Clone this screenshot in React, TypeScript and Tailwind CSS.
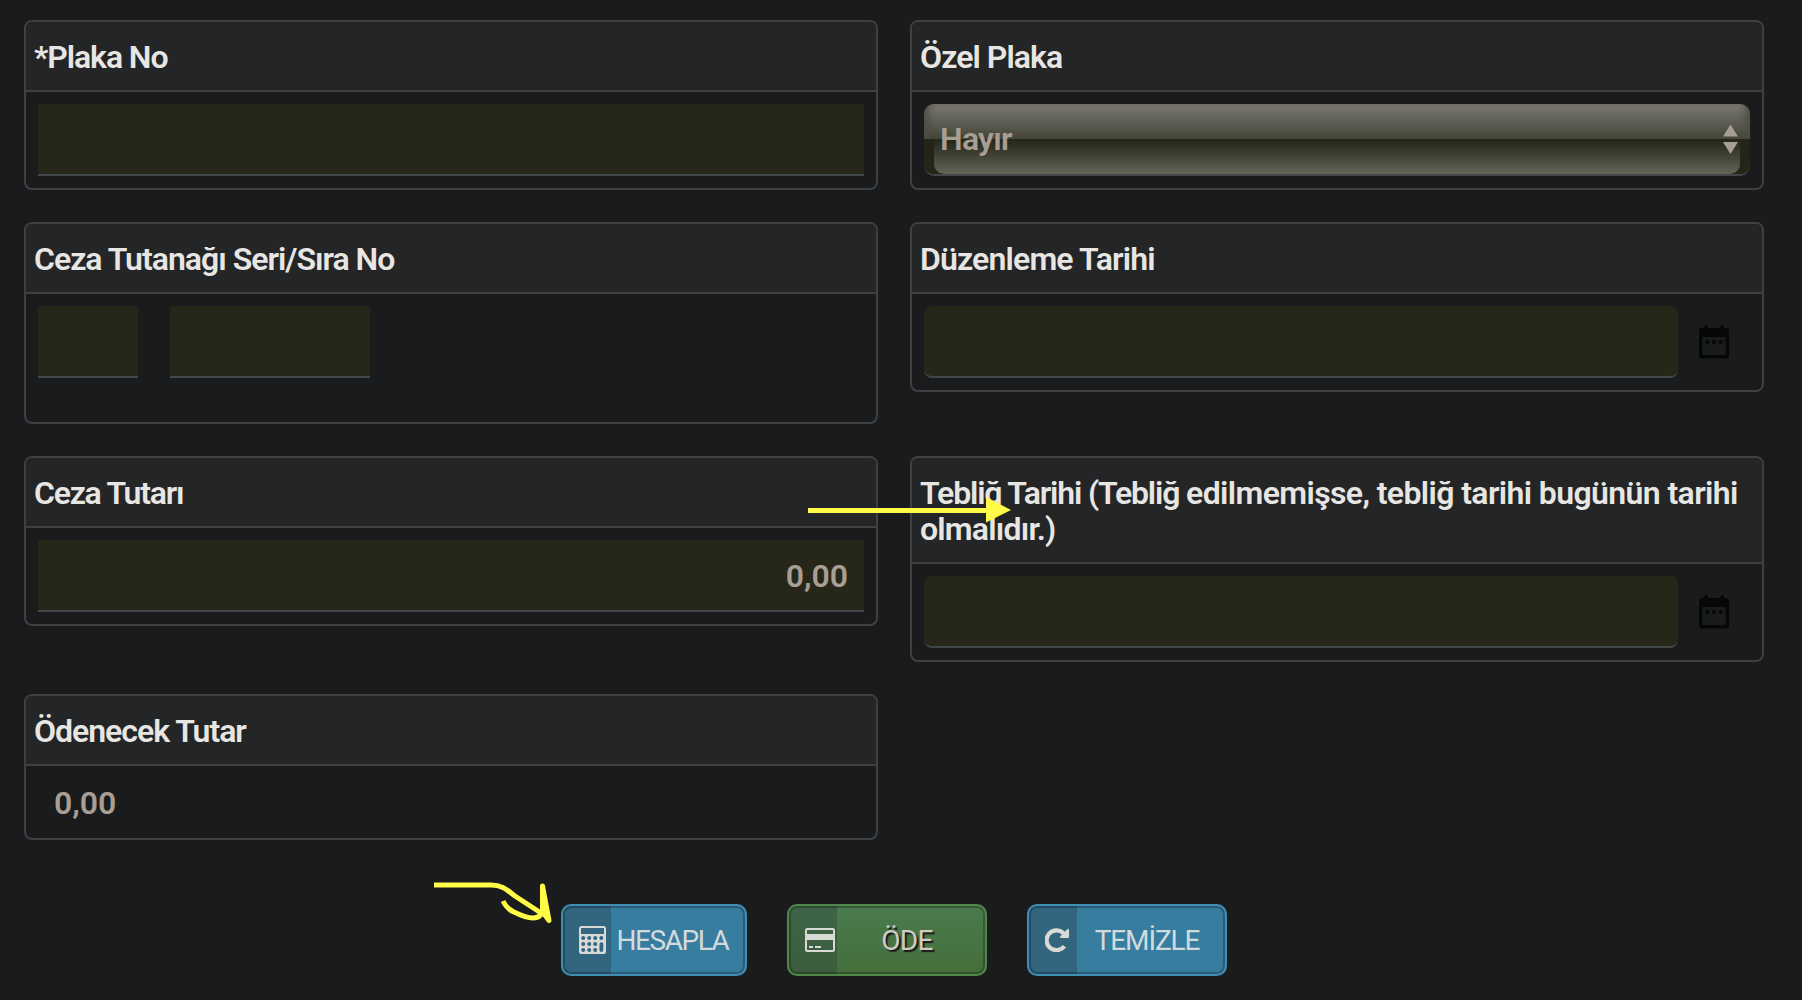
import type { ReactNode } from "react";

function Card({ title, children }: { title: ReactNode; children: ReactNode }) {
  return (
    <section className="overflow-hidden rounded-lg border-2 border-[#3e4042] bg-[#191b1d]">
      <h2 className="border-b-2 border-[#3e4042] bg-[#232527] px-2 pt-[17px] pb-[15px] text-[32px] leading-9 font-semibold whitespace-nowrap text-[#e8e6e3]">
        {title}
      </h2>
      {children}
    </section>
  );
}

const field = "h-[72px] border-b-2 border-[#42474b] bg-[#262719] outline-none";

function CalendarIcon() {
  return (
    <svg width="30" height="34" viewBox="0 0 30 34" fill="#060808" aria-hidden="true">
      <path
        fillRule="evenodd"
        d="M5.500 3V1.500a1.700 1.700 0 0 1 3.400 0V3h12.600V1.500a1.700 1.700 0 0 1 3.400 0V3H27a3 3 0 0 1 3 3v24.500a3 3 0 0 1-3 3H3a3 3 0 0 1-3-3V6a3 3 0 0 1 3-3zM3.300 12v18h23.400V12z"
      />
      <rect x="6.500" y="15" width="4" height="4" rx="1.500" />
      <rect x="13" y="15" width="4" height="4" rx="1.500" />
      <rect x="19.700" y="15" width="4" height="4" rx="1.500" />
    </svg>
  );
}

function DateField() {
  return (
    <div className="flex p-3">
      <input className={`${field} w-[754px] rounded-lg`} />
      <button className="ml-[21px]" type="button">
        <CalendarIcon />
      </button>
    </div>
  );
}

const holes = [
  [4.2, 12], [10.2, 12], [16.2, 12], [22.3, 12],
  [4.2, 18], [10.2, 18], [16.2, 18],
  [4.2, 24], [10.2, 24], [16.2, 24],
];

function CalculatorIcon() {
  return (
    <svg width="27" height="28" viewBox="0 0 27 28" aria-hidden="true">
      <rect width="27" height="28" rx="2.500" fill="currentColor" />
      <g fill="#336680">
        <rect x="2" y="2" width="23" height="6" rx="0.500" />
        {holes.map(([x, y]) => (
          <circle key={`${x}-${y}`} cx={x} cy={y} r="2" />
        ))}
        <rect x="20.500" y="16.200" width="3.800" height="9.800" rx="1.900" />
      </g>
    </svg>
  );
}

function CreditCardIcon() {
  return (
    <svg width="30" height="24" viewBox="0 0 30 24" fill="currentColor" aria-hidden="true">
      <path
        fillRule="evenodd"
        d="M2.500 0h25A2.500 2.500 0 0 1 30 2.500v19a2.500 2.500 0 0 1-2.500 2.500h-25A2.500 2.500 0 0 1 0 21.500v-19A2.500 2.500 0 0 1 2.500 0zM2 2v4h26V2zM2 12v10h26V12z"
      />
      <path d="M4 18h4v2H4zM10 18h6v2h-6z" />
    </svg>
  );
}

function RepeatIcon() {
  return (
    <svg width="24" height="24" viewBox="0 0 24 24" aria-hidden="true">
      <path
        d="M18.500 5.300A9.900 9.900 0 1 0 19.400 18.200"
        fill="none"
        stroke="currentColor"
        strokeWidth="4.200"
      />
      <path d="M24 2v7a1 1 0 0 1-1 1h-7a1 1 0 0 1-.7-1.700L22.300 1.300A1 1 0 0 1 24 2z" fill="currentColor" />
    </svg>
  );
}

function ActionButton({ icon, className, children }: { icon: ReactNode; className: string; children: ReactNode }) {
  return (
    <button
      type="button"
      className={`relative flex h-[72px] items-stretch overflow-hidden rounded-[10px] border-2 text-[28px] after:absolute after:inset-0 after:rounded-lg after:border-2 after:border-black/25 ${className}`}
    >
      <span className="flex w-12 items-center bg-[#2b3b3f]/35 pl-4 text-[#d9d9d6]">{icon}</span>
      <span className="flex flex-1 items-center justify-center pt-px pr-2">{children}</span>
    </button>
  );
}

const blue = "border-[#408eb5] bg-[#377da0] text-[#d3dadb]";
const green = "border-[#4f8746] bg-linear-to-b from-[#4a7a4e] to-[#446f3a] text-[#d0cbc3]";

export default function App() {
  return (
    <main className="relative h-[1000px] w-full overflow-hidden bg-[#191b1d] px-6 pt-5 font-['Roboto',sans-serif]">
      <div className="grid w-[1740px] grid-cols-[854px_854px] items-start gap-8">
        <Card title={<span className="tracking-[-1.08px]">*Plaka No</span>}>
          <div className="p-3">
            <input className={`${field} block w-full`} />
          </div>
        </Card>

        <Card title={<span className="tracking-[-0.93px]">Özel Plaka</span>}>
          <div className="p-3">
            <div className="relative flex h-[72px] items-center justify-between overflow-hidden rounded-[10px] border-b-2 border-[#42474b] bg-[#242517] pr-3 pl-4 text-[32px] font-semibold text-[#a89e92]">
              <div className="absolute inset-x-0 top-0 h-[35px] bg-linear-to-b from-[#7b7971] to-[#45463a] shadow-[inset_9px_0_8px_-5px_#4b4c42,inset_-9px_0_8px_-5px_#4b4c42]" />
              <div className="absolute inset-x-2.5 top-[35px] h-[35px] rounded-b-[10px] bg-linear-to-b from-[#242519] to-[#646559]" />
              <span className="relative tracking-[-0.75px]">Hayır</span>
              <svg className="relative" width="15" height="30" viewBox="0 0 15 30" fill="#a89e92" aria-hidden="true">
                <path d="M7.500 0.500 15 12.500H0zM0 18h15L7.500 30z" />
              </svg>
            </div>
          </div>
        </Card>

        <Card title={<span className="tracking-[-1px]">Ceza Tutanağı Seri/Sıra No</span>}>
          <div className="flex h-32 gap-8 p-3">
            <input className={`${field} w-[100px]`} />
            <input className={`${field} w-[200px]`} />
          </div>
        </Card>

        <Card title={<span className="tracking-[-0.84px]">Düzenleme Tarihi</span>}>
          <DateField />
        </Card>

        <Card title={<span className="tracking-[-1.25px]">Ceza Tutarı</span>}>
          <div className="p-3">
            <input
              className={`${field} block w-full pt-0.5 pr-4 pl-4 text-right text-[32px] font-semibold text-[#a89e92]`}
              defaultValue="0,00"
            />
          </div>
        </Card>

        <Card
          title={
            <>
              <span className="tracking-[-1.15px]">Tebliğ Tarihi (Tebliğ </span>
              <span className="tracking-[-0.61px]">edilmemişse, tebliğ tarihi bugünün tarihi</span>
              <br />
              <span className="tracking-[-0.8px]">olmalıdır.)</span>
            </>
          }
        >
          <DateField />
        </Card>

        <Card title={<span className="tracking-[-1.02px]">Ödenecek Tutar</span>}>
          <div className="flex h-[72px] items-center px-7 pt-0.5 text-[32px] font-semibold text-[#a89e92]">0,00</div>
        </Card>
      </div>

      <div className="mt-16 ml-[537px] flex gap-10">
        <ActionButton className={`w-[186px] ${blue}`} icon={<CalculatorIcon />}>
          <span className="mr-[3px] tracking-[-1.47px]">HESAPLA</span>
        </ActionButton>
        <ActionButton className={`w-[200px] ${green}`} icon={<CreditCardIcon />}>
          <span className="tracking-[-0.7px] [text-shadow:2px_2px_1px_#181a1b]">ÖDE</span>
        </ActionButton>
        <ActionButton className={`w-[200px] ${blue}`} icon={<RepeatIcon />}>
          <span className="tracking-[-1.15px]">TEMİZLE</span>
        </ActionButton>
      </div>

      <svg
        className="pointer-events-none absolute top-[496px] left-[808px]"
        width="204"
        height="30"
        viewBox="0 0 204 30"
        fill="#fffb47"
        aria-hidden="true"
      >
        <path d="M0 12h178V1l25 13-25 12.500V17H0z" />
      </svg>
      <svg
        className="pointer-events-none absolute top-[880px] left-[430px]"
        width="126"
        height="46"
        viewBox="0 0 126 46"
        fill="none"
        stroke="#fffb47"
        strokeWidth="5"
        aria-hidden="true"
      >
        <path d="M4 5h57c11 0 15 4 24 11l26 17" />
        <path
          d="M73 21c3 6 6 9 11 11 6 3 13 6 19 6 7 0 9-4 9.500-9V6l6.500 34.500-6-8"
          strokeLinejoin="round"
        />
      </svg>
    </main>
  );
}
